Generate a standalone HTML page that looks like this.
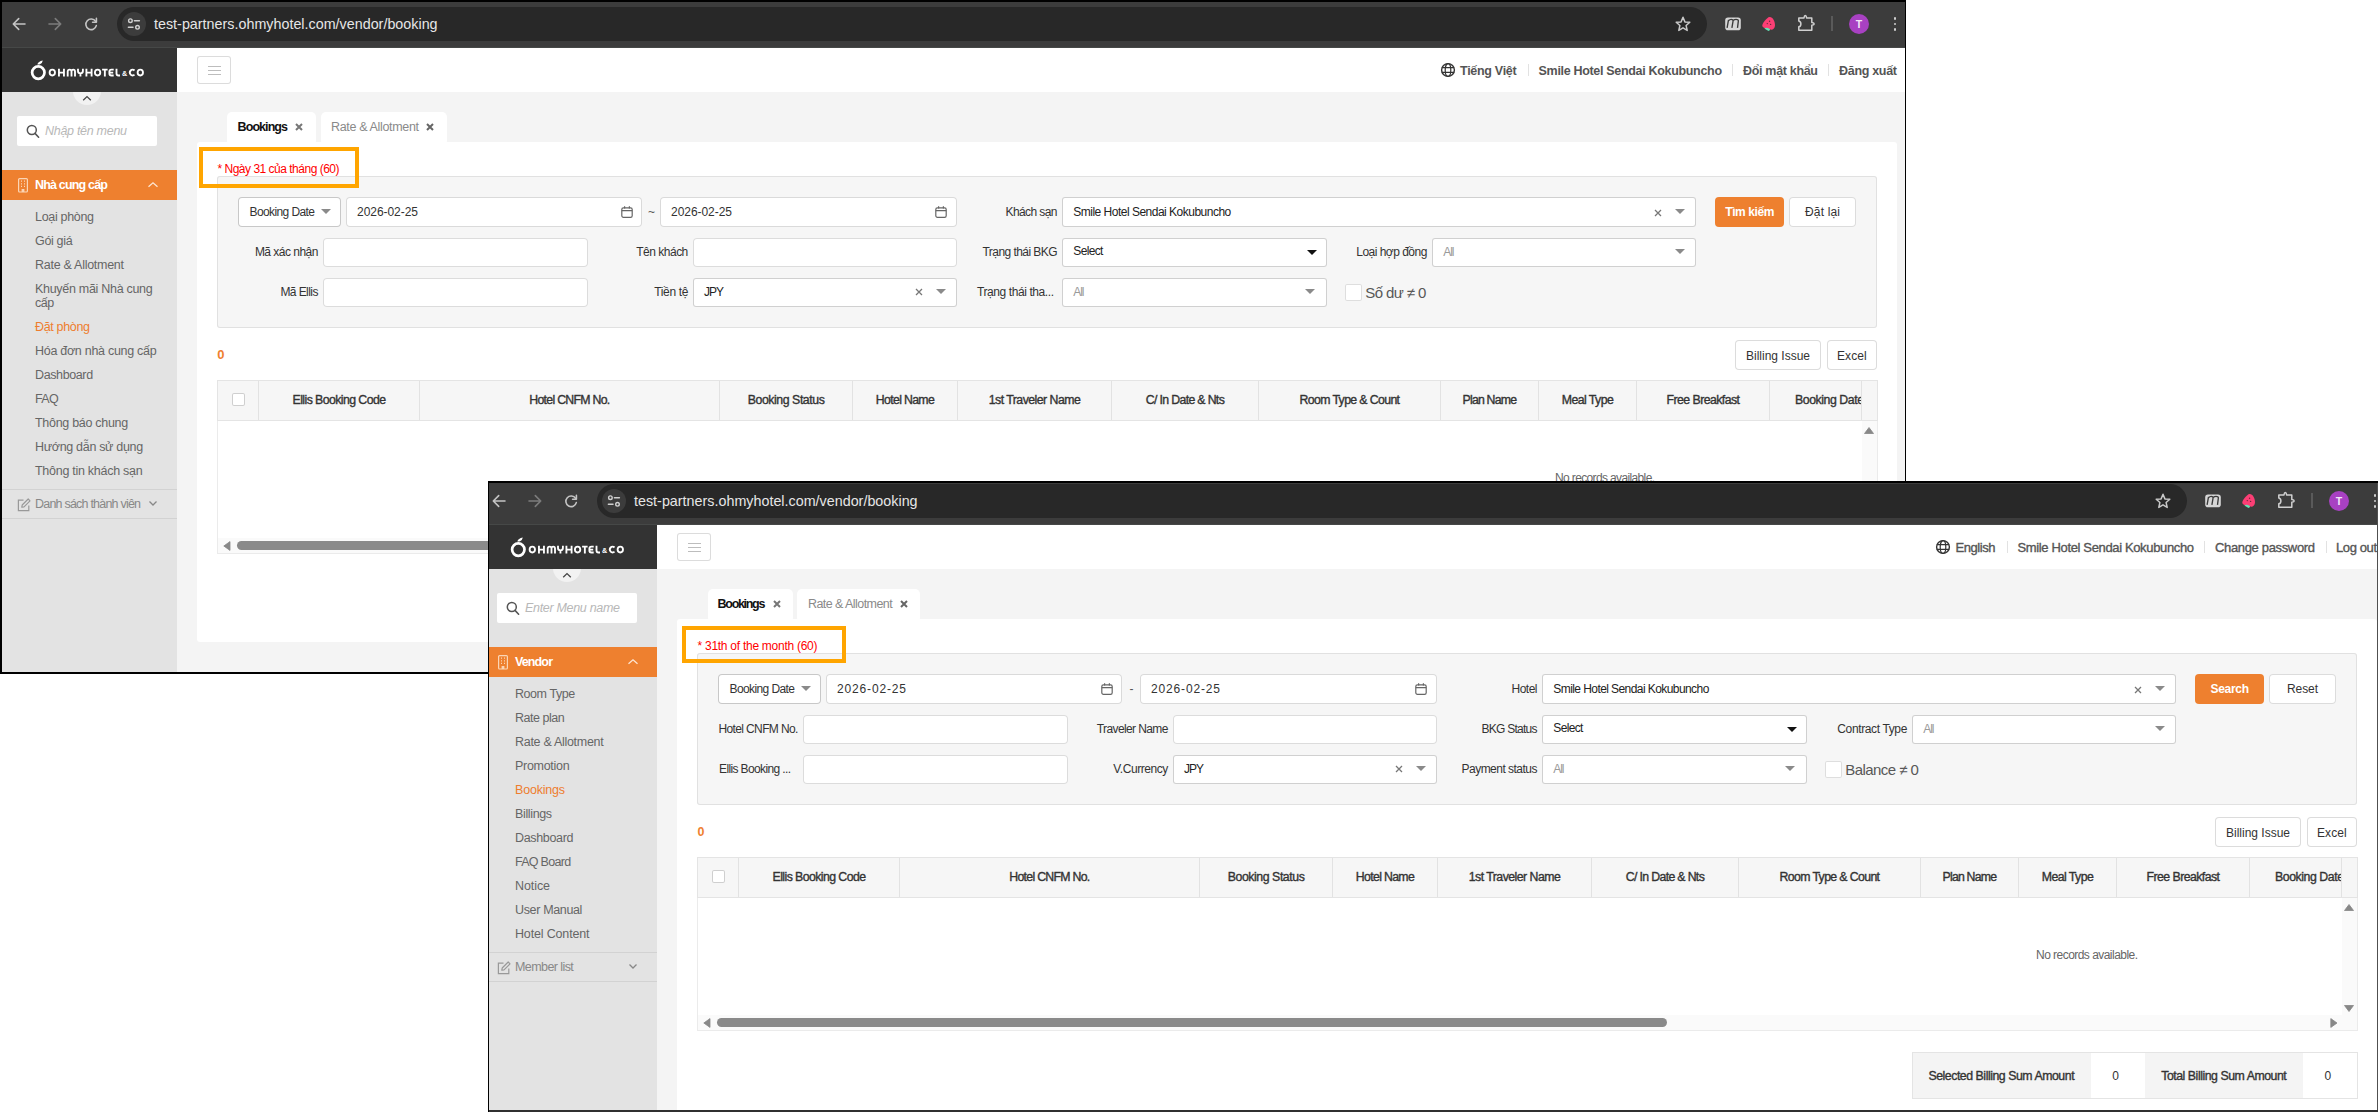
<!DOCTYPE html><html><head><meta charset="utf-8"><style>html,body{margin:0;padding:0;width:2378px;height:1112px;overflow:hidden;background:#fff;}body{position:relative;font-family:"Liberation Sans",sans-serif;}.b,.t,.s{position:absolute;}.t{white-space:nowrap;}</style></head><body><div class="b" style="left:0px;top:0px;width:1906px;height:674px;background:#000;overflow:hidden"><div class="b" style="left:2px;top:2px;width:1903px;height:670px;overflow:hidden"><div class="b" style="left:-2px;top:-2px;width:1910px;height:680px"><div class="b" style="left:0px;top:0px;width:1910px;height:47px;background:#3c3c3c;"></div><div class="b" style="left:0px;top:47px;width:1910px;height:1px;background:#464847;"></div><svg class="s" style="left:10px;top:15px;" width="18" height="18" viewBox="0 0 18 18"><path d="M15 9H3.8 M8.7 3.6L3.3 9L8.7 14.4" fill="none" stroke="#c4c4c4" stroke-width="1.6" stroke-linecap="round" stroke-linejoin="round"/></svg><svg class="s" style="left:46px;top:15px;" width="18" height="18" viewBox="0 0 18 18"><path d="M3 9H14.2 M9.3 3.6L14.7 9L9.3 14.4" fill="none" stroke="#7c7c7c" stroke-width="1.6" stroke-linecap="round" stroke-linejoin="round"/></svg><svg class="s" style="left:81px;top:15px;" width="19" height="19" viewBox="0 0 19 19"><path d="M14.6 6.4A5.3 5.3 0 1 0 15.3 10.6" fill="none" stroke="#c4c4c4" stroke-width="1.6" stroke-linecap="round"/><path d="M15.4 3.4V7.3H11.6" fill="none" stroke="#c4c4c4" stroke-width="1.6" stroke-linecap="round" stroke-linejoin="round"/></svg><div class="b" style="left:117px;top:7px;width:1590px;height:34px;background:#282828;border-radius:17px;"></div><div class="b" style="left:122px;top:12px;width:24px;height:24px;background:#3c3c3c;border-radius:12px;"></div><svg class="s" style="left:122px;top:12px;" width="24" height="24" viewBox="0 0 24 24"><circle cx="8.4" cy="8.7" r="1.8" fill="none" stroke="#d0d0d0" stroke-width="1.4"/><path d="M12.4 8.7H17.4 M6.4 15.3H11" stroke="#d0d0d0" stroke-width="1.5" stroke-linecap="round"/><circle cx="15.5" cy="15.3" r="1.8" fill="none" stroke="#d0d0d0" stroke-width="1.4"/></svg><div class="t" style="left:154.00px;top:17.00px;font-size:14.3px;line-height:14.3px;color:#e6e6e6;font-weight:400;font-style:normal;letter-spacing:0.016px;">test-partners.ohmyhotel.com/vendor/booking</div><svg class="s" style="left:1674px;top:15px;" width="18" height="18" viewBox="0 0 18 18"><path d="M9 2.2L10.9 6.9L15.8 7.3L12.1 10.5L13.2 15.4L9 12.8L4.8 15.4L5.9 10.5L2.2 7.3L7.1 6.9Z" fill="none" stroke="#c8c8c8" stroke-width="1.5" stroke-linejoin="round"/></svg><svg class="s" style="left:1723px;top:16px;" width="20" height="16" viewBox="0 0 20 16"><rect x="2.2" y="1.6" width="15.6" height="12.6" rx="2.8" fill="#d6d6d6"/><path d="M4.1 11.8L5.5 3.8 M5.4 4.8Q7.6 2.6 9.7 3.8Q10.3 4.3 10 5.4L8.9 11.8 M10.1 4.6Q12.5 2.6 14.9 3.8Q15.6 4.3 15.3 5.4L14.5 11.8" fill="none" stroke="#3a3a3a" stroke-width="1.35"/></svg><svg class="s" style="left:1760px;top:15px;" width="18" height="18" viewBox="0 0 18 18"><path d="M9.6 1.9C12.5 1.6 15.2 6 15 10.5C14.9 13.5 12.8 15 10.5 14.6C7.5 14.1 3.8 13.5 2.6 11.8C1.6 10.3 3 7.8 5 5.5C6.6 3.6 8 2 9.6 1.9Z" fill="#fb3f75"/><path d="M4.3 13.4Q7.5 11.6 10.1 14.3Q9.7 15.9 8.5 16.1Q6.4 14.6 4.3 13.4Z" fill="#62e3b5"/><circle cx="9.6" cy="6.3" r="0.7" fill="#6a2a3a"/><circle cx="7.3" cy="8.6" r="0.7" fill="#6a2a3a"/><circle cx="10.6" cy="9.4" r="0.7" fill="#6a2a3a"/></svg><svg class="s" style="left:1796px;top:13px;" width="20" height="20" viewBox="0 0 20 20"><path d="M2.8 4.9H8Q8.3 2.6 9.3 2.6Q10.3 2.6 10.6 4.9H15.8V9.6Q18.2 9.9 18.2 10.9Q18.2 11.9 15.8 12.2V17.2H2.8V13.8Q4.9 13.3 4.9 10.9Q4.9 8.5 2.8 8Z" fill="none" stroke="#d0d0d0" stroke-width="1.5" stroke-linejoin="round"/></svg><div class="b" style="left:1831px;top:16px;width:2px;height:15px;background:#5a5a5a;"></div><div class="b" style="left:1849px;top:14px;width:20px;height:20px;background:#a841c2;border-radius:10px;"></div><div class="t" style="left:1855.79px;top:19.00px;font-size:10.5px;line-height:10.5px;color:#f4e8f8;font-weight:700;font-style:normal;letter-spacing:0.000px;">T</div><div class="b" style="left:1893.6px;top:17.200000000000003px;width:2.800000000000182px;height:2.799999999999997px;background:#cfcfcf;border-radius:1.4px;"></div><div class="b" style="left:1893.6px;top:22.6px;width:2.800000000000182px;height:2.799999999999997px;background:#cfcfcf;border-radius:1.4px;"></div><div class="b" style="left:1893.6px;top:28.0px;width:2.800000000000182px;height:2.799999999999997px;background:#cfcfcf;border-radius:1.4px;"></div><div class="b" style="left:0px;top:48px;width:177px;height:44px;background:#333333;"></div><div class="b" style="left:0px;top:92px;width:177px;height:588px;background:#e3e3e3;"></div><div class="b" style="left:177px;top:48px;width:1733px;height:44px;background:#ffffff;"></div><div class="b" style="left:177px;top:92px;width:1733px;height:588px;background:#f4f4f4;"></div><div class="b" style="left:73px;top:77px;width:28px;height:28px;background:#f2f2f2;border-radius:14px;"></div><div class="b" style="left:0px;top:48px;width:177px;height:44px;background:#333333;"></div><svg class="s" style="left:29px;top:59px;" width="20" height="23" viewBox="0 0 20 23"><circle cx="9.3" cy="13.6" r="6.2" fill="none" stroke="#fff" stroke-width="2.7"/><path d="M8.3 5.4 Q9.2 2.2 13.8 1.4 Q13.6 4 10.6 5.6Z" fill="#fff"/></svg><svg class="s" style="left:40px;top:60px;" width="110" height="20" viewBox="0 0 110 20"><ellipse cx="12.3" cy="12.55" rx="2.68" ry="2.9" stroke="#fff" stroke-width="1.85" fill="none"/><ellipse cx="57.6" cy="12.55" rx="2.68" ry="2.9" stroke="#fff" stroke-width="1.85" fill="none"/><ellipse cx="100.3" cy="12.55" rx="2.68" ry="2.9" stroke="#fff" stroke-width="1.85" fill="none"/><path d="M18.95 8.7V16.4M23.95 8.7V16.4M18.95 12.55H23.95" stroke="#fff" stroke-width="1.85" fill="none"/><path d="M46.4 8.7V16.4M51.6 8.7V16.4M46.4 12.55H51.6" stroke="#fff" stroke-width="1.85" fill="none"/><path d="M27.7 16.4V11.6Q27.7 9.6 29.65 9.6Q31.5 9.6 31.5 11.6V16.4M31.5 11.6Q31.5 9.6 33.25 9.6Q35 9.6 35 11.6V16.4" stroke="#fff" stroke-width="1.85" fill="none"/><path d="M38 8.7V10.9Q38 13.3 40.45 13.3Q42.9 13.3 42.9 10.9V8.7M40.45 13.3V16.4" stroke="#fff" stroke-width="1.85" fill="none"/><path d="M62.1 9.6H67.6M64.85 9.6V16.4" stroke="#fff" stroke-width="1.85" fill="none"/><path d="M73.7 9.6H71.4Q69.4 9.6 69.4 11.6V13.5Q69.4 15.5 71.4 15.5H73.7M69.4 12.55H73.2" stroke="#fff" stroke-width="1.85" fill="none"/><path d="M76.5 8.7V13.5Q76.5 15.5 78.5 15.5H80" stroke="#fff" stroke-width="1.85" fill="none"/><path d="M94.5 10.5A2.7 2.9 0 1 0 94.5 14.6" stroke="#fff" stroke-width="1.85" fill="none"/></svg><div class="t" style="left:121.90px;top:70.00px;font-size:7.2px;line-height:7.2px;color:#fff;font-weight:700;font-style:normal;letter-spacing:0.000px;">&amp;</div><svg class="s" style="left:80px;top:93px;" width="14" height="10" viewBox="0 0 14 10"><path d="M3.2 7.2L7 3.6L10.8 7.2" fill="none" stroke="#444" stroke-width="1.3"/></svg><div class="b" style="left:17px;top:116px;width:140px;height:30px;background:#ffffff;border-radius:2px;"></div><svg class="s" style="left:24px;top:122px;" width="18" height="18" viewBox="0 0 18 18"><circle cx="7.8" cy="8" r="4.5" fill="none" stroke="#555" stroke-width="1.5"/><path d="M11 11.4L14.6 15.2" stroke="#555" stroke-width="1.6" stroke-linecap="round"/></svg><div class="t" style="left:45.00px;top:125.00px;font-size:12.5px;line-height:12.5px;color:#b8b8b8;font-weight:400;font-style:italic;letter-spacing:-0.289px;">Nhập tên menu</div><div class="b" style="left:0px;top:170px;width:177px;height:30px;background:#ee802f;"></div><svg class="s" style="left:16px;top:177px;" width="14" height="17" viewBox="0 0 14 17"><rect x="2.6" y="1.6" width="8.8" height="13.4" rx="1" fill="none" stroke="#fbd5b5" stroke-width="1.2"/><path d="M5 4.2h1M8 4.2h1M5 6.8h1M8 6.8h1M5 9.4h1M8 9.4h1" stroke="#fbd5b5" stroke-width="1.2"/><rect x="5.6" y="12" width="2.8" height="3" fill="#fbd5b5"/></svg><div class="t" style="left:35.00px;top:179.00px;font-size:12.5px;line-height:12.5px;color:#ffffff;font-weight:700;font-style:normal;letter-spacing:-0.814px;">Nhà cung cấp</div><svg class="s" style="left:145px;top:179px;" width="16" height="12" viewBox="0 0 16 12"><path d="M3.5 7.8L8 3.8L12.5 7.8" fill="none" stroke="#fde5d2" stroke-width="1.3"/></svg><div class="t" style="left:35.00px;top:211.00px;font-size:12.5px;line-height:12.5px;color:#666;font-weight:400;font-style:normal;letter-spacing:-0.318px;">Loại phòng</div><div class="t" style="left:35.00px;top:235.00px;font-size:12.5px;line-height:12.5px;color:#666;font-weight:400;font-style:normal;letter-spacing:-0.334px;">Gói giá</div><div class="t" style="left:35.00px;top:259.00px;font-size:12.5px;line-height:12.5px;color:#666;font-weight:400;font-style:normal;letter-spacing:-0.273px;">Rate &amp; Allotment</div><div class="t" style="left:35.00px;top:283.00px;font-size:12.5px;line-height:12.5px;color:#666;font-weight:400;font-style:normal;letter-spacing:-0.294px;">Khuyến mãi Nhà cung</div><div class="t" style="left:35.00px;top:297.00px;font-size:12.5px;line-height:12.5px;color:#666;font-weight:400;font-style:normal;letter-spacing:-0.426px;">cấp</div><div class="t" style="left:35.00px;top:321.00px;font-size:12.5px;line-height:12.5px;color:#ee7d2e;font-weight:400;font-style:normal;letter-spacing:-0.335px;">Đặt phòng</div><div class="t" style="left:35.00px;top:345.00px;font-size:12.5px;line-height:12.5px;color:#666;font-weight:400;font-style:normal;letter-spacing:-0.280px;">Hóa đơn nhà cung cấp</div><div class="t" style="left:35.00px;top:369.00px;font-size:12.5px;line-height:12.5px;color:#666;font-weight:400;font-style:normal;letter-spacing:-0.381px;">Dashboard</div><div class="t" style="left:35.00px;top:393.00px;font-size:12.5px;line-height:12.5px;color:#666;font-weight:400;font-style:normal;letter-spacing:-0.603px;">FAQ</div><div class="t" style="left:35.00px;top:417.00px;font-size:12.5px;line-height:12.5px;color:#666;font-weight:400;font-style:normal;letter-spacing:-0.292px;">Thông báo chung</div><div class="t" style="left:35.00px;top:441.00px;font-size:12.5px;line-height:12.5px;color:#666;font-weight:400;font-style:normal;letter-spacing:-0.312px;">Hướng dẫn sử dụng</div><div class="t" style="left:35.00px;top:465.00px;font-size:12.5px;line-height:12.5px;color:#666;font-weight:400;font-style:normal;letter-spacing:-0.276px;">Thông tin khách sạn</div><div class="b" style="left:0px;top:489px;width:177px;height:1px;background:#d2d2d2;"></div><svg class="s" style="left:15px;top:497px;" width="16" height="16" viewBox="0 0 16 16"><path d="M8.5 3.2H3.4V13.6H13.8V8.5" fill="none" stroke="#999" stroke-width="1.2"/><path d="M6.8 10.2L7.2 8L13.2 2L15 3.8L9 9.8Z" fill="none" stroke="#999" stroke-width="1.2" stroke-linejoin="round"/></svg><div class="t" style="left:35.00px;top:498.00px;font-size:12.5px;line-height:12.5px;color:#888;font-weight:400;font-style:normal;letter-spacing:-0.785px;">Danh sách thành viên</div><svg class="s" style="left:147px;top:499px;" width="12" height="10" viewBox="0 0 12 10"><path d="M2.5 2.5L6 6L9.5 2.5" fill="none" stroke="#888" stroke-width="1.3"/></svg><div class="b" style="left:0px;top:518px;width:177px;height:1px;background:#d2d2d2;"></div><div class="t" style="left:1839.00px;top:65.00px;font-size:12.5px;line-height:12.5px;color:#555;font-weight:700;font-style:normal;letter-spacing:-0.302px;">Đăng xuất</div><div class="b" style="left:1828px;top:64px;width:1px;height:12px;background:#e2e2e2;"></div><div class="t" style="left:1743.00px;top:65.00px;font-size:12.5px;line-height:12.5px;color:#555;font-weight:700;font-style:normal;letter-spacing:-0.316px;">Đổi mật khẩu</div><div class="b" style="left:1732px;top:64px;width:1px;height:12px;background:#e2e2e2;"></div><div class="t" style="left:1538.60px;top:65.00px;font-size:12.5px;line-height:12.5px;color:#555;font-weight:700;font-style:normal;letter-spacing:-0.320px;">Smile Hotel Sendai Kokubuncho</div><div class="b" style="left:1528px;top:64px;width:1px;height:12px;background:#e2e2e2;"></div><div class="t" style="left:1460.10px;top:65.00px;font-size:12.5px;line-height:12.5px;color:#555;font-weight:700;font-style:normal;letter-spacing:-0.308px;">Tiếng Việt</div><svg class="s" style="left:1439.8px;top:62px;" width="16" height="16" viewBox="0 0 16 16"><circle cx="8" cy="8" r="6.4" fill="none" stroke="#333" stroke-width="1.4"/><ellipse cx="8" cy="8" rx="2.8" ry="6.4" fill="none" stroke="#333" stroke-width="1.2"/><path d="M1.8 5.6H14.2M1.8 10.4H14.2" stroke="#333" stroke-width="1.2"/></svg><div class="b" style="left:197px;top:56px;width:34px;height:28px;background:#fff;box-shadow:inset 0 0 0 1px #dcdcdc;border-radius:3px;"></div><div class="b" style="left:208px;top:66px;width:13px;height:1px;background:#bdbdbd;"></div><div class="b" style="left:208px;top:70px;width:13px;height:1px;background:#bdbdbd;"></div><div class="b" style="left:208px;top:74px;width:13px;height:1px;background:#bdbdbd;"></div><div class="b" style="left:227px;top:112px;width:89px;height:34px;background:#fff;border-radius:5px;"></div><div class="b" style="left:321px;top:112px;width:126px;height:34px;background:#fff;border-radius:5px;"></div><div class="b" style="left:197px;top:141.5px;width:1700px;height:500.0px;background:#fff;border-radius:3px;"></div><div class="t" style="left:237.60px;top:121.00px;font-size:12.5px;line-height:12.5px;color:#111;font-weight:700;font-style:normal;letter-spacing:-0.934px;">Bookings</div><svg class="s" style="left:295.0px;top:123.0px;" width="8" height="8" viewBox="0 0 8 8"><path d="M1 1L7 7M7 1L1 7" stroke="#777" stroke-width="2"/></svg><div class="t" style="left:331.00px;top:121.00px;font-size:12.5px;line-height:12.5px;color:#8a8a8a;font-weight:400;font-style:normal;letter-spacing:-0.340px;">Rate &amp; Allotment</div><svg class="s" style="left:426.0px;top:123.0px;" width="8" height="8" viewBox="0 0 8 8"><path d="M1 1L7 7M7 1L1 7" stroke="#666" stroke-width="2"/></svg><div class="t" style="left:217.50px;top:163.00px;font-size:12px;line-height:12px;color:#ff0000;font-weight:400;font-style:normal;letter-spacing:-0.496px;">* Ngày 31 của tháng (60)</div><div class="b" style="left:217px;top:176px;width:1660px;height:152px;background:#f6f6f6;box-shadow:inset 0 0 0 1px #e1e1e1;border-radius:3px;"></div><div class="b" style="left:238px;top:197px;width:103px;height:30px;background:#fff;box-shadow:inset 0 0 0 1px #c8c8c8;border-radius:4px;"></div><div class="t" style="left:249.50px;top:206.00px;font-size:12px;line-height:12px;color:#333;font-weight:400;font-style:normal;letter-spacing:-0.595px;">Booking Date</div><svg class="s" style="left:320.5px;top:209.1px;" width="10" height="5" viewBox="0 0 10 5"><path d="M0 0H10L5.0 5Z" fill="#8a8a8a"/></svg><div class="b" style="left:346px;top:197px;width:296px;height:30px;background:#fff;box-shadow:inset 0 0 0 1px #dadada;border-radius:4px;"></div><div class="t" style="left:357.00px;top:206.00px;font-size:12px;line-height:12px;color:#333;font-weight:400;font-style:normal;letter-spacing:-0.042px;">2026-02-25</div><svg class="s" style="left:619.5px;top:205px;" width="14" height="14" viewBox="0 0 14 14"><rect x="1.8" y="2.8" width="10.4" height="9.6" rx="1.6" fill="none" stroke="#666" stroke-width="1.2"/><path d="M1.8 5.6H12.2M4.6 1.2V3.6M9.4 1.2V3.6" stroke="#666" stroke-width="1.2"/></svg><div class="t" style="left:648.00px;top:206.00px;font-size:12px;line-height:12px;color:#555;font-weight:400;font-style:normal;letter-spacing:0.000px;">~</div><div class="b" style="left:660px;top:197px;width:297px;height:30px;background:#fff;box-shadow:inset 0 0 0 1px #dadada;border-radius:4px;"></div><div class="t" style="left:671.00px;top:206.00px;font-size:12px;line-height:12px;color:#333;font-weight:400;font-style:normal;letter-spacing:-0.042px;">2026-02-25</div><svg class="s" style="left:933.5px;top:205px;" width="14" height="14" viewBox="0 0 14 14"><rect x="1.8" y="2.8" width="10.4" height="9.6" rx="1.6" fill="none" stroke="#666" stroke-width="1.2"/><path d="M1.8 5.6H12.2M4.6 1.2V3.6M9.4 1.2V3.6" stroke="#666" stroke-width="1.2"/></svg><div class="t" style="left:1005.50px;top:206.00px;font-size:12px;line-height:12px;color:#333;font-weight:400;font-style:normal;letter-spacing:-0.588px;">Khách sạn</div><div class="b" style="left:1062px;top:197px;width:634px;height:30px;background:#fff;box-shadow:inset 0 0 0 1px #d0d0d0;border-radius:3px;"></div><div class="t" style="left:1073.30px;top:206.00px;font-size:12px;line-height:12px;color:#222;font-weight:400;font-style:normal;letter-spacing:-0.504px;">Smile Hotel Sendai Kokubuncho</div><svg class="s" style="left:1654.0px;top:208.5px;" width="8" height="8" viewBox="0 0 8 8"><path d="M1 1L7 7M7 1L1 7" stroke="#777" stroke-width="1.3"/></svg><svg class="s" style="left:1675.0px;top:209.1px;" width="10" height="5" viewBox="0 0 10 5"><path d="M0 0H10L5.0 5Z" fill="#8a8a8a"/></svg><div class="b" style="left:1715px;top:197px;width:69px;height:30px;background:#ee802f;border-radius:4px;"></div><div class="t" style="left:1725.30px;top:206.00px;font-size:12px;line-height:12px;color:#fff;font-weight:700;font-style:normal;letter-spacing:-0.431px;">Tìm kiếm</div><div class="b" style="left:1789px;top:197px;width:67px;height:30px;background:#fff;box-shadow:inset 0 0 0 1px #dcdcdc;border-radius:4px;"></div><div class="t" style="left:1805.00px;top:206.00px;font-size:12px;line-height:12px;color:#333;font-weight:400;font-style:normal;letter-spacing:0.165px;">Đặt lại</div><div class="t" style="left:254.90px;top:246.00px;font-size:12px;line-height:12px;color:#333;font-weight:400;font-style:normal;letter-spacing:-0.520px;">Mã xác nhận</div><div class="b" style="left:323px;top:238px;width:265px;height:29px;background:#fff;box-shadow:inset 0 0 0 1px #dcdcdc;border-radius:4px;"></div><div class="t" style="left:636.30px;top:246.00px;font-size:12px;line-height:12px;color:#333;font-weight:400;font-style:normal;letter-spacing:-0.504px;">Tên khách</div><div class="b" style="left:693px;top:238px;width:264px;height:29px;background:#fff;box-shadow:inset 0 0 0 1px #dcdcdc;border-radius:4px;"></div><div class="t" style="left:982.50px;top:246.00px;font-size:12px;line-height:12px;color:#333;font-weight:400;font-style:normal;letter-spacing:-0.558px;">Trạng thái BKG</div><div class="b" style="left:1062px;top:238px;width:265px;height:29px;background:#fff;box-shadow:inset 0 0 0 1px #d0d0d0;border-radius:3px;"></div><div class="t" style="left:1073.30px;top:245.00px;font-size:12px;line-height:12px;color:#222;font-weight:400;font-style:normal;letter-spacing:-0.670px;">Select</div><svg class="s" style="left:1307.0px;top:250.0px;" width="10" height="5" viewBox="0 0 10 5"><path d="M0 0H10L5.0 5Z" fill="#111"/></svg><div class="t" style="left:1356.30px;top:246.00px;font-size:12px;line-height:12px;color:#333;font-weight:400;font-style:normal;letter-spacing:-0.522px;">Loại hợp đồng</div><div class="b" style="left:1432px;top:238px;width:264px;height:29px;background:#fff;box-shadow:inset 0 0 0 1px #d0d0d0;border-radius:3px;"></div><div class="t" style="left:1443.30px;top:246.00px;font-size:12px;line-height:12px;color:#9a9a9a;font-weight:400;font-style:normal;letter-spacing:-1.168px;">All</div><svg class="s" style="left:1675.0px;top:249.1px;" width="10" height="5" viewBox="0 0 10 5"><path d="M0 0H10L5.0 5Z" fill="#8a8a8a"/></svg><div class="t" style="left:280.40px;top:286.00px;font-size:12px;line-height:12px;color:#333;font-weight:400;font-style:normal;letter-spacing:-0.572px;">Mã Ellis</div><div class="b" style="left:323px;top:278px;width:265px;height:29px;background:#fff;box-shadow:inset 0 0 0 1px #dcdcdc;border-radius:4px;"></div><div class="t" style="left:654.30px;top:286.00px;font-size:12px;line-height:12px;color:#333;font-weight:400;font-style:normal;letter-spacing:-0.373px;">Tiền tệ</div><div class="b" style="left:693px;top:278px;width:264px;height:29px;background:#fff;box-shadow:inset 0 0 0 1px #d0d0d0;border-radius:3px;"></div><div class="t" style="left:704.00px;top:286.00px;font-size:12px;line-height:12px;color:#222;font-weight:400;font-style:normal;letter-spacing:-1.004px;">JPY</div><svg class="s" style="left:915.0px;top:288.0px;" width="8" height="8" viewBox="0 0 8 8"><path d="M1 1L7 7M7 1L1 7" stroke="#777" stroke-width="1.3"/></svg><svg class="s" style="left:936.0px;top:288.8px;" width="10" height="5" viewBox="0 0 10 5"><path d="M0 0H10L5.0 5Z" fill="#8a8a8a"/></svg><div class="t" style="left:977.00px;top:286.00px;font-size:12px;line-height:12px;color:#333;font-weight:400;font-style:normal;letter-spacing:-0.412px;">Trạng thái tha...</div><div class="b" style="left:1062px;top:278px;width:265px;height:29px;background:#fff;box-shadow:inset 0 0 0 1px #d0d0d0;border-radius:3px;"></div><div class="t" style="left:1073.30px;top:286.00px;font-size:12px;line-height:12px;color:#9a9a9a;font-weight:400;font-style:normal;letter-spacing:-1.168px;">All</div><svg class="s" style="left:1305.0px;top:288.8px;" width="10" height="5" viewBox="0 0 10 5"><path d="M0 0H10L5.0 5Z" fill="#8a8a8a"/></svg><div class="b" style="left:1345px;top:284px;width:17px;height:17px;background:#fff;box-shadow:inset 0 0 0 1px #dedede;border-radius:2px;"></div><div class="t" style="left:1365.30px;top:285.00px;font-size:15px;line-height:15px;color:#585858;font-weight:400;font-style:normal;letter-spacing:-0.601px;">Số dư ≠ 0</div><div class="t" style="left:217.20px;top:348.00px;font-size:13px;line-height:13px;color:#ef8030;font-weight:700;font-style:normal;letter-spacing:0.000px;font-family:"Liberation Serif",serif;">0</div><div class="b" style="left:1735px;top:340px;width:86px;height:30px;background:#fff;box-shadow:inset 0 0 0 1px #dcdcdc;border-radius:4px;"></div><div class="t" style="left:1746.00px;top:350.00px;font-size:12px;line-height:12px;color:#333;font-weight:400;font-style:normal;letter-spacing:-0.002px;">Billing Issue</div><div class="b" style="left:1826.7px;top:340px;width:50.299999999999955px;height:30px;background:#fff;box-shadow:inset 0 0 0 1px #dcdcdc;border-radius:4px;"></div><div class="t" style="left:1837.05px;top:350.00px;font-size:12px;line-height:12px;color:#333;font-weight:400;font-style:normal;letter-spacing:0.039px;">Excel</div><div class="b" style="left:217px;top:380px;width:1661px;height:174px;background:#fff;box-shadow:inset 0 0 0 1px #ebebeb;"></div><div class="b" style="left:217px;top:380px;width:1661px;height:41px;background:#f6f6f6;box-shadow:inset 0 0 0 1px #e4e4e4;"></div><div class="b" style="left:258px;top:381px;width:1px;height:39px;background:#e2e2e2;"></div><div class="b" style="left:419px;top:381px;width:1px;height:39px;background:#e2e2e2;"></div><div class="b" style="left:719px;top:381px;width:1px;height:39px;background:#e2e2e2;"></div><div class="b" style="left:852px;top:381px;width:1px;height:39px;background:#e2e2e2;"></div><div class="b" style="left:957px;top:381px;width:1px;height:39px;background:#e2e2e2;"></div><div class="b" style="left:1111px;top:381px;width:1px;height:39px;background:#e2e2e2;"></div><div class="b" style="left:1258px;top:381px;width:1px;height:39px;background:#e2e2e2;"></div><div class="b" style="left:1440px;top:381px;width:1px;height:39px;background:#e2e2e2;"></div><div class="b" style="left:1538px;top:381px;width:1px;height:39px;background:#e2e2e2;"></div><div class="b" style="left:1636px;top:381px;width:1px;height:39px;background:#e2e2e2;"></div><div class="b" style="left:1769px;top:381px;width:1px;height:39px;background:#e2e2e2;"></div><div class="b" style="left:1861px;top:381px;width:1px;height:39px;background:#e2e2e2;"></div><div class="t" style="left:292.55px;top:394.00px;font-size:12.3px;line-height:12.3px;color:#333;font-weight:400;font-style:normal;letter-spacing:-0.573px;-webkit-text-stroke:0.35px #333;">Ellis Booking Code</div><div class="t" style="left:529.30px;top:394.00px;font-size:12.3px;line-height:12.3px;color:#333;font-weight:400;font-style:normal;letter-spacing:-0.709px;-webkit-text-stroke:0.35px #333;">Hotel CNFM No.</div><div class="t" style="left:747.80px;top:394.00px;font-size:12.3px;line-height:12.3px;color:#333;font-weight:400;font-style:normal;letter-spacing:-0.441px;-webkit-text-stroke:0.35px #333;">Booking Status</div><div class="t" style="left:875.80px;top:394.00px;font-size:12.3px;line-height:12.3px;color:#333;font-weight:400;font-style:normal;letter-spacing:-0.660px;-webkit-text-stroke:0.35px #333;">Hotel Name</div><div class="t" style="left:988.80px;top:394.00px;font-size:12.3px;line-height:12.3px;color:#333;font-weight:400;font-style:normal;letter-spacing:-0.530px;-webkit-text-stroke:0.35px #333;">1st Traveler Name</div><div class="t" style="left:1145.80px;top:394.00px;font-size:12.3px;line-height:12.3px;color:#333;font-weight:400;font-style:normal;letter-spacing:-0.657px;-webkit-text-stroke:0.35px #333;">C/ In Date &amp; Nts</div><div class="t" style="left:1299.55px;top:394.00px;font-size:12.3px;line-height:12.3px;color:#333;font-weight:400;font-style:normal;letter-spacing:-0.627px;-webkit-text-stroke:0.35px #333;">Room Type &amp; Count</div><div class="t" style="left:1462.55px;top:394.00px;font-size:12.3px;line-height:12.3px;color:#333;font-weight:400;font-style:normal;letter-spacing:-0.793px;-webkit-text-stroke:0.35px #333;">Plan Name</div><div class="t" style="left:1561.80px;top:394.00px;font-size:12.3px;line-height:12.3px;color:#333;font-weight:400;font-style:normal;letter-spacing:-0.565px;-webkit-text-stroke:0.35px #333;">Meal Type</div><div class="t" style="left:1666.55px;top:394.00px;font-size:12.3px;line-height:12.3px;color:#333;font-weight:400;font-style:normal;letter-spacing:-0.551px;-webkit-text-stroke:0.35px #333;">Free Breakfast</div><div class="b" style="left:1770px;top:381px;width:91px;height:39px;overflow:hidden"><div class="t" style="left:25.00px;top:13.00px;font-size:12.3px;line-height:12.3px;color:#333;font-weight:400;font-style:normal;letter-spacing:-0.440px;-webkit-text-stroke:0.35px #333;">Booking Date</div></div><div class="b" style="left:232px;top:393px;width:13px;height:13px;background:#fff;box-shadow:inset 0 0 0 1px #cfcfcf;border-radius:2px;"></div><div class="b" style="left:1862px;top:421px;width:15px;height:117px;background:#fafafa;"></div><svg class="s" style="left:1863.5px;top:426.5px;" width="10" height="7" viewBox="0 0 10 7"><path d="M0.5 6.5H9.5L5 0.5Z" fill="#888" stroke="#888" stroke-width="0.8" stroke-linejoin="round"/></svg><svg class="s" style="left:1863.5px;top:527.5px;" width="10" height="7" viewBox="0 0 10 7"><path d="M0.5 0.5H9.5L5 6.5Z" fill="#888" stroke="#888" stroke-width="0.8" stroke-linejoin="round"/></svg><div class="t" style="left:1555.00px;top:472.00px;font-size:12px;line-height:12px;color:#666;font-weight:400;font-style:normal;letter-spacing:-0.636px;">No records available.</div><div class="b" style="left:218px;top:538px;width:1659px;height:15px;background:#fafafa;"></div><svg class="s" style="left:222.5px;top:541px;" width="8" height="10" viewBox="0 0 8 10"><path d="M7 0.6V9.4L0.8 5Z" fill="#888" stroke="#888" stroke-width="0.8" stroke-linejoin="round"/></svg><div class="b" style="left:236.8px;top:541px;width:950.5px;height:9px;background:#8a8a8a;border-radius:4.5px;"></div><svg class="s" style="left:1850px;top:541px;" width="8" height="10" viewBox="0 0 8 10"><path d="M0.8 0.6V9.4L7 5Z" fill="#888" stroke="#888" stroke-width="0.8" stroke-linejoin="round"/></svg><div class="b" style="left:1432px;top:575px;width:446px;height:47px;background:#fff;box-shadow:inset 0 0 0 1px #e4e4e4;"></div><div class="b" style="left:1433px;top:576px;width:177.5px;height:45px;background:#f4f4f4;"></div><div class="b" style="left:1664.5px;top:576px;width:158.0px;height:45px;background:#f4f4f4;"></div><div class="t" style="left:1448.40px;top:593.00px;font-size:12.3px;line-height:12.3px;color:#333;font-weight:400;font-style:normal;letter-spacing:-0.451px;-webkit-text-stroke:0.35px #333;">Selected Billing Sum Amount</div><div class="t" style="left:1632.16px;top:593.00px;font-size:12px;line-height:12px;color:#333;font-weight:400;font-style:normal;letter-spacing:0.000px;">0</div><div class="t" style="left:1681.20px;top:593.00px;font-size:12.3px;line-height:12.3px;color:#333;font-weight:400;font-style:normal;letter-spacing:-0.454px;-webkit-text-stroke:0.35px #333;">Total Billing Sum Amount</div><div class="t" style="left:1844.46px;top:593.00px;font-size:12px;line-height:12px;color:#333;font-weight:400;font-style:normal;letter-spacing:0.000px;">0</div><div class="b" style="left:199px;top:147px;width:152px;height:33px;border:4px solid #ffa500"></div></div></div></div><div class="b" style="left:488px;top:481px;width:1890px;height:631px;background:#000;overflow:hidden"><div class="b" style="left:1px;top:2px;width:1888px;height:627px;overflow:hidden"><div class="b" style="left:-9px;top:-6px;width:1910px;height:680px"><div class="b" style="left:0px;top:0px;width:1910px;height:47px;background:#3c3c3c;"></div><div class="b" style="left:0px;top:47px;width:1910px;height:1px;background:#464847;"></div><svg class="s" style="left:10px;top:15px;" width="18" height="18" viewBox="0 0 18 18"><path d="M15 9H3.8 M8.7 3.6L3.3 9L8.7 14.4" fill="none" stroke="#c4c4c4" stroke-width="1.6" stroke-linecap="round" stroke-linejoin="round"/></svg><svg class="s" style="left:46px;top:15px;" width="18" height="18" viewBox="0 0 18 18"><path d="M3 9H14.2 M9.3 3.6L14.7 9L9.3 14.4" fill="none" stroke="#7c7c7c" stroke-width="1.6" stroke-linecap="round" stroke-linejoin="round"/></svg><svg class="s" style="left:81px;top:15px;" width="19" height="19" viewBox="0 0 19 19"><path d="M14.6 6.4A5.3 5.3 0 1 0 15.3 10.6" fill="none" stroke="#c4c4c4" stroke-width="1.6" stroke-linecap="round"/><path d="M15.4 3.4V7.3H11.6" fill="none" stroke="#c4c4c4" stroke-width="1.6" stroke-linecap="round" stroke-linejoin="round"/></svg><div class="b" style="left:117px;top:7px;width:1590px;height:34px;background:#282828;border-radius:17px;"></div><div class="b" style="left:122px;top:12px;width:24px;height:24px;background:#3c3c3c;border-radius:12px;"></div><svg class="s" style="left:122px;top:12px;" width="24" height="24" viewBox="0 0 24 24"><circle cx="8.4" cy="8.7" r="1.8" fill="none" stroke="#d0d0d0" stroke-width="1.4"/><path d="M12.4 8.7H17.4 M6.4 15.3H11" stroke="#d0d0d0" stroke-width="1.5" stroke-linecap="round"/><circle cx="15.5" cy="15.3" r="1.8" fill="none" stroke="#d0d0d0" stroke-width="1.4"/></svg><div class="t" style="left:154.00px;top:17.00px;font-size:14.3px;line-height:14.3px;color:#e6e6e6;font-weight:400;font-style:normal;letter-spacing:0.016px;">test-partners.ohmyhotel.com/vendor/booking</div><svg class="s" style="left:1674px;top:15px;" width="18" height="18" viewBox="0 0 18 18"><path d="M9 2.2L10.9 6.9L15.8 7.3L12.1 10.5L13.2 15.4L9 12.8L4.8 15.4L5.9 10.5L2.2 7.3L7.1 6.9Z" fill="none" stroke="#c8c8c8" stroke-width="1.5" stroke-linejoin="round"/></svg><svg class="s" style="left:1723px;top:16px;" width="20" height="16" viewBox="0 0 20 16"><rect x="2.2" y="1.6" width="15.6" height="12.6" rx="2.8" fill="#d6d6d6"/><path d="M4.1 11.8L5.5 3.8 M5.4 4.8Q7.6 2.6 9.7 3.8Q10.3 4.3 10 5.4L8.9 11.8 M10.1 4.6Q12.5 2.6 14.9 3.8Q15.6 4.3 15.3 5.4L14.5 11.8" fill="none" stroke="#3a3a3a" stroke-width="1.35"/></svg><svg class="s" style="left:1760px;top:15px;" width="18" height="18" viewBox="0 0 18 18"><path d="M9.6 1.9C12.5 1.6 15.2 6 15 10.5C14.9 13.5 12.8 15 10.5 14.6C7.5 14.1 3.8 13.5 2.6 11.8C1.6 10.3 3 7.8 5 5.5C6.6 3.6 8 2 9.6 1.9Z" fill="#fb3f75"/><path d="M4.3 13.4Q7.5 11.6 10.1 14.3Q9.7 15.9 8.5 16.1Q6.4 14.6 4.3 13.4Z" fill="#62e3b5"/><circle cx="9.6" cy="6.3" r="0.7" fill="#6a2a3a"/><circle cx="7.3" cy="8.6" r="0.7" fill="#6a2a3a"/><circle cx="10.6" cy="9.4" r="0.7" fill="#6a2a3a"/></svg><svg class="s" style="left:1796px;top:13px;" width="20" height="20" viewBox="0 0 20 20"><path d="M2.8 4.9H8Q8.3 2.6 9.3 2.6Q10.3 2.6 10.6 4.9H15.8V9.6Q18.2 9.9 18.2 10.9Q18.2 11.9 15.8 12.2V17.2H2.8V13.8Q4.9 13.3 4.9 10.9Q4.9 8.5 2.8 8Z" fill="none" stroke="#d0d0d0" stroke-width="1.5" stroke-linejoin="round"/></svg><div class="b" style="left:1831px;top:16px;width:2px;height:15px;background:#5a5a5a;"></div><div class="b" style="left:1849px;top:14px;width:20px;height:20px;background:#a841c2;border-radius:10px;"></div><div class="t" style="left:1855.79px;top:19.00px;font-size:10.5px;line-height:10.5px;color:#f4e8f8;font-weight:700;font-style:normal;letter-spacing:0.000px;">T</div><div class="b" style="left:1893.6px;top:17.200000000000003px;width:2.800000000000182px;height:2.799999999999997px;background:#cfcfcf;border-radius:1.4px;"></div><div class="b" style="left:1893.6px;top:22.6px;width:2.800000000000182px;height:2.799999999999997px;background:#cfcfcf;border-radius:1.4px;"></div><div class="b" style="left:1893.6px;top:28.0px;width:2.800000000000182px;height:2.799999999999997px;background:#cfcfcf;border-radius:1.4px;"></div><div class="b" style="left:0px;top:48px;width:177px;height:44px;background:#333333;"></div><div class="b" style="left:0px;top:92px;width:177px;height:588px;background:#e3e3e3;"></div><div class="b" style="left:177px;top:48px;width:1733px;height:44px;background:#ffffff;"></div><div class="b" style="left:177px;top:92px;width:1733px;height:588px;background:#f4f4f4;"></div><div class="b" style="left:73px;top:77px;width:28px;height:28px;background:#f2f2f2;border-radius:14px;"></div><div class="b" style="left:0px;top:48px;width:177px;height:44px;background:#333333;"></div><svg class="s" style="left:29px;top:59px;" width="20" height="23" viewBox="0 0 20 23"><circle cx="9.3" cy="13.6" r="6.2" fill="none" stroke="#fff" stroke-width="2.7"/><path d="M8.3 5.4 Q9.2 2.2 13.8 1.4 Q13.6 4 10.6 5.6Z" fill="#fff"/></svg><svg class="s" style="left:40px;top:60px;" width="110" height="20" viewBox="0 0 110 20"><ellipse cx="12.3" cy="12.55" rx="2.68" ry="2.9" stroke="#fff" stroke-width="1.85" fill="none"/><ellipse cx="57.6" cy="12.55" rx="2.68" ry="2.9" stroke="#fff" stroke-width="1.85" fill="none"/><ellipse cx="100.3" cy="12.55" rx="2.68" ry="2.9" stroke="#fff" stroke-width="1.85" fill="none"/><path d="M18.95 8.7V16.4M23.95 8.7V16.4M18.95 12.55H23.95" stroke="#fff" stroke-width="1.85" fill="none"/><path d="M46.4 8.7V16.4M51.6 8.7V16.4M46.4 12.55H51.6" stroke="#fff" stroke-width="1.85" fill="none"/><path d="M27.7 16.4V11.6Q27.7 9.6 29.65 9.6Q31.5 9.6 31.5 11.6V16.4M31.5 11.6Q31.5 9.6 33.25 9.6Q35 9.6 35 11.6V16.4" stroke="#fff" stroke-width="1.85" fill="none"/><path d="M38 8.7V10.9Q38 13.3 40.45 13.3Q42.9 13.3 42.9 10.9V8.7M40.45 13.3V16.4" stroke="#fff" stroke-width="1.85" fill="none"/><path d="M62.1 9.6H67.6M64.85 9.6V16.4" stroke="#fff" stroke-width="1.85" fill="none"/><path d="M73.7 9.6H71.4Q69.4 9.6 69.4 11.6V13.5Q69.4 15.5 71.4 15.5H73.7M69.4 12.55H73.2" stroke="#fff" stroke-width="1.85" fill="none"/><path d="M76.5 8.7V13.5Q76.5 15.5 78.5 15.5H80" stroke="#fff" stroke-width="1.85" fill="none"/><path d="M94.5 10.5A2.7 2.9 0 1 0 94.5 14.6" stroke="#fff" stroke-width="1.85" fill="none"/></svg><div class="t" style="left:121.90px;top:70.00px;font-size:7.2px;line-height:7.2px;color:#fff;font-weight:700;font-style:normal;letter-spacing:0.000px;">&amp;</div><svg class="s" style="left:80px;top:93px;" width="14" height="10" viewBox="0 0 14 10"><path d="M3.2 7.2L7 3.6L10.8 7.2" fill="none" stroke="#444" stroke-width="1.3"/></svg><div class="b" style="left:17px;top:116px;width:140px;height:30px;background:#ffffff;border-radius:2px;"></div><svg class="s" style="left:24px;top:122px;" width="18" height="18" viewBox="0 0 18 18"><circle cx="7.8" cy="8" r="4.5" fill="none" stroke="#555" stroke-width="1.5"/><path d="M11 11.4L14.6 15.2" stroke="#555" stroke-width="1.6" stroke-linecap="round"/></svg><div class="t" style="left:45.00px;top:125.00px;font-size:12.5px;line-height:12.5px;color:#b8b8b8;font-weight:400;font-style:italic;letter-spacing:-0.311px;">Enter Menu name</div><div class="b" style="left:0px;top:170px;width:177px;height:30px;background:#ee802f;"></div><svg class="s" style="left:16px;top:177px;" width="14" height="17" viewBox="0 0 14 17"><rect x="2.6" y="1.6" width="8.8" height="13.4" rx="1" fill="none" stroke="#fbd5b5" stroke-width="1.2"/><path d="M5 4.2h1M8 4.2h1M5 6.8h1M8 6.8h1M5 9.4h1M8 9.4h1" stroke="#fbd5b5" stroke-width="1.2"/><rect x="5.6" y="12" width="2.8" height="3" fill="#fbd5b5"/></svg><div class="t" style="left:35.00px;top:179.00px;font-size:12.5px;line-height:12.5px;color:#ffffff;font-weight:700;font-style:normal;letter-spacing:-0.874px;">Vendor</div><svg class="s" style="left:145px;top:179px;" width="16" height="12" viewBox="0 0 16 12"><path d="M3.5 7.8L8 3.8L12.5 7.8" fill="none" stroke="#fde5d2" stroke-width="1.3"/></svg><div class="t" style="left:35.00px;top:211.00px;font-size:12.5px;line-height:12.5px;color:#666;font-weight:400;font-style:normal;letter-spacing:-0.436px;">Room Type</div><div class="t" style="left:35.00px;top:235.00px;font-size:12.5px;line-height:12.5px;color:#666;font-weight:400;font-style:normal;letter-spacing:-0.463px;">Rate plan</div><div class="t" style="left:35.00px;top:259.00px;font-size:12.5px;line-height:12.5px;color:#666;font-weight:400;font-style:normal;letter-spacing:-0.293px;">Rate &amp; Allotment</div><div class="t" style="left:35.00px;top:283.00px;font-size:12.5px;line-height:12.5px;color:#666;font-weight:400;font-style:normal;letter-spacing:-0.296px;">Promotion</div><div class="t" style="left:35.00px;top:307.00px;font-size:12.5px;line-height:12.5px;color:#ee7d2e;font-weight:400;font-style:normal;letter-spacing:-0.189px;">Bookings</div><div class="t" style="left:35.00px;top:331.00px;font-size:12.5px;line-height:12.5px;color:#666;font-weight:400;font-style:normal;letter-spacing:-0.357px;">Billings</div><div class="t" style="left:35.00px;top:355.00px;font-size:12.5px;line-height:12.5px;color:#666;font-weight:400;font-style:normal;letter-spacing:-0.343px;">Dashboard</div><div class="t" style="left:35.00px;top:379.00px;font-size:12.5px;line-height:12.5px;color:#666;font-weight:400;font-style:normal;letter-spacing:-0.717px;">FAQ Board</div><div class="t" style="left:35.00px;top:403.00px;font-size:12.5px;line-height:12.5px;color:#666;font-weight:400;font-style:normal;letter-spacing:-0.086px;">Notice</div><div class="t" style="left:35.00px;top:427.00px;font-size:12.5px;line-height:12.5px;color:#666;font-weight:400;font-style:normal;letter-spacing:-0.346px;">User Manual</div><div class="t" style="left:35.00px;top:451.00px;font-size:12.5px;line-height:12.5px;color:#666;font-weight:400;font-style:normal;letter-spacing:-0.161px;">Hotel Content</div><div class="b" style="left:0px;top:475px;width:177px;height:1px;background:#d2d2d2;"></div><svg class="s" style="left:15px;top:483px;" width="16" height="16" viewBox="0 0 16 16"><path d="M8.5 3.2H3.4V13.6H13.8V8.5" fill="none" stroke="#999" stroke-width="1.2"/><path d="M6.8 10.2L7.2 8L13.2 2L15 3.8L9 9.8Z" fill="none" stroke="#999" stroke-width="1.2" stroke-linejoin="round"/></svg><div class="t" style="left:35.00px;top:484.00px;font-size:12.5px;line-height:12.5px;color:#888;font-weight:400;font-style:normal;letter-spacing:-0.579px;">Member list</div><svg class="s" style="left:147px;top:485px;" width="12" height="10" viewBox="0 0 12 10"><path d="M2.5 2.5L6 6L9.5 2.5" fill="none" stroke="#888" stroke-width="1.3"/></svg><div class="b" style="left:0px;top:504px;width:177px;height:1px;background:#d2d2d2;"></div><div class="t" style="left:1856.00px;top:64.00px;font-size:13px;line-height:13px;color:#555;font-weight:400;font-style:normal;letter-spacing:-0.395px;-webkit-text-stroke:0.35px #555;">Log out</div><div class="b" style="left:1846px;top:64px;width:1px;height:12px;background:#e2e2e2;"></div><div class="t" style="left:1735.00px;top:64.00px;font-size:13px;line-height:13px;color:#555;font-weight:400;font-style:normal;letter-spacing:-0.341px;-webkit-text-stroke:0.35px #555;">Change password</div><div class="b" style="left:1724px;top:64px;width:1px;height:12px;background:#e2e2e2;"></div><div class="t" style="left:1537.50px;top:64.00px;font-size:13px;line-height:13px;color:#555;font-weight:400;font-style:normal;letter-spacing:-0.355px;-webkit-text-stroke:0.35px #555;">Smile Hotel Sendai Kokubuncho</div><div class="b" style="left:1527px;top:64px;width:1px;height:12px;background:#e2e2e2;"></div><div class="t" style="left:1475.50px;top:64.00px;font-size:13px;line-height:13px;color:#555;font-weight:400;font-style:normal;letter-spacing:-0.439px;-webkit-text-stroke:0.35px #555;">English</div><svg class="s" style="left:1455.2px;top:62px;" width="16" height="16" viewBox="0 0 16 16"><circle cx="8" cy="8" r="6.4" fill="none" stroke="#333" stroke-width="1.4"/><ellipse cx="8" cy="8" rx="2.8" ry="6.4" fill="none" stroke="#333" stroke-width="1.2"/><path d="M1.8 5.6H14.2M1.8 10.4H14.2" stroke="#333" stroke-width="1.2"/></svg><div class="b" style="left:197px;top:56px;width:34px;height:28px;background:#fff;box-shadow:inset 0 0 0 1px #dcdcdc;border-radius:3px;"></div><div class="b" style="left:208px;top:66px;width:13px;height:1px;background:#bdbdbd;"></div><div class="b" style="left:208px;top:70px;width:13px;height:1px;background:#bdbdbd;"></div><div class="b" style="left:208px;top:74px;width:13px;height:1px;background:#bdbdbd;"></div><div class="b" style="left:227.6px;top:112px;width:85.4px;height:34px;background:#fff;border-radius:5px;"></div><div class="b" style="left:317px;top:112px;width:123px;height:34px;background:#fff;border-radius:5px;"></div><div class="b" style="left:197px;top:141.5px;width:1700px;height:500.0px;background:#fff;border-radius:3px;"></div><div class="t" style="left:237.60px;top:121.00px;font-size:12.5px;line-height:12.5px;color:#111;font-weight:700;font-style:normal;letter-spacing:-1.306px;">Bookings</div><svg class="s" style="left:293.0px;top:123.0px;" width="8" height="8" viewBox="0 0 8 8"><path d="M1 1L7 7M7 1L1 7" stroke="#777" stroke-width="2"/></svg><div class="t" style="left:328.00px;top:121.00px;font-size:12.5px;line-height:12.5px;color:#8a8a8a;font-weight:400;font-style:normal;letter-spacing:-0.560px;">Rate &amp; Allotment</div><svg class="s" style="left:419.5px;top:123.0px;" width="8" height="8" viewBox="0 0 8 8"><path d="M1 1L7 7M7 1L1 7" stroke="#666" stroke-width="2"/></svg><div class="t" style="left:217.50px;top:163.00px;font-size:12px;line-height:12px;color:#ff0000;font-weight:400;font-style:normal;letter-spacing:-0.264px;">* 31th of the month (60)</div><div class="b" style="left:217px;top:176px;width:1660px;height:152px;background:#f6f6f6;box-shadow:inset 0 0 0 1px #e1e1e1;border-radius:3px;"></div><div class="b" style="left:238px;top:197px;width:103px;height:30px;background:#fff;box-shadow:inset 0 0 0 1px #c8c8c8;border-radius:4px;"></div><div class="t" style="left:249.50px;top:206.00px;font-size:12px;line-height:12px;color:#333;font-weight:400;font-style:normal;letter-spacing:-0.595px;">Booking Date</div><svg class="s" style="left:320.5px;top:209.1px;" width="10" height="5" viewBox="0 0 10 5"><path d="M0 0H10L5.0 5Z" fill="#8a8a8a"/></svg><div class="b" style="left:346px;top:197px;width:296px;height:30px;background:#fff;box-shadow:inset 0 0 0 1px #dadada;border-radius:4px;"></div><div class="t" style="left:357.00px;top:206.00px;font-size:12px;line-height:12px;color:#333;font-weight:400;font-style:normal;letter-spacing:0.847px;">2026-02-25</div><svg class="s" style="left:619.5px;top:205px;" width="14" height="14" viewBox="0 0 14 14"><rect x="1.8" y="2.8" width="10.4" height="9.6" rx="1.6" fill="none" stroke="#666" stroke-width="1.2"/><path d="M1.8 5.6H12.2M4.6 1.2V3.6M9.4 1.2V3.6" stroke="#666" stroke-width="1.2"/></svg><div class="t" style="left:649.50px;top:206.00px;font-size:12px;line-height:12px;color:#555;font-weight:400;font-style:normal;letter-spacing:0.000px;">-</div><div class="b" style="left:660px;top:197px;width:297px;height:30px;background:#fff;box-shadow:inset 0 0 0 1px #dadada;border-radius:4px;"></div><div class="t" style="left:671.00px;top:206.00px;font-size:12px;line-height:12px;color:#333;font-weight:400;font-style:normal;letter-spacing:0.847px;">2026-02-25</div><svg class="s" style="left:933.5px;top:205px;" width="14" height="14" viewBox="0 0 14 14"><rect x="1.8" y="2.8" width="10.4" height="9.6" rx="1.6" fill="none" stroke="#666" stroke-width="1.2"/><path d="M1.8 5.6H12.2M4.6 1.2V3.6M9.4 1.2V3.6" stroke="#666" stroke-width="1.2"/></svg><div class="t" style="left:1031.50px;top:206.00px;font-size:12px;line-height:12px;color:#333;font-weight:400;font-style:normal;letter-spacing:-0.503px;">Hotel</div><div class="b" style="left:1062px;top:197px;width:634px;height:30px;background:#fff;box-shadow:inset 0 0 0 1px #d0d0d0;border-radius:3px;"></div><div class="t" style="left:1073.30px;top:206.00px;font-size:12px;line-height:12px;color:#222;font-weight:400;font-style:normal;letter-spacing:-0.575px;">Smile Hotel Sendai Kokubuncho</div><svg class="s" style="left:1654.0px;top:208.5px;" width="8" height="8" viewBox="0 0 8 8"><path d="M1 1L7 7M7 1L1 7" stroke="#777" stroke-width="1.3"/></svg><svg class="s" style="left:1675.0px;top:209.1px;" width="10" height="5" viewBox="0 0 10 5"><path d="M0 0H10L5.0 5Z" fill="#8a8a8a"/></svg><div class="b" style="left:1715px;top:197px;width:69px;height:30px;background:#ee802f;border-radius:4px;"></div><div class="t" style="left:1730.55px;top:206.00px;font-size:12px;line-height:12px;color:#fff;font-weight:700;font-style:normal;letter-spacing:-0.305px;">Search</div><div class="b" style="left:1789px;top:197px;width:67px;height:30px;background:#fff;box-shadow:inset 0 0 0 1px #dcdcdc;border-radius:4px;"></div><div class="t" style="left:1807.00px;top:206.00px;font-size:12px;line-height:12px;color:#333;font-weight:400;font-style:normal;letter-spacing:-0.087px;">Reset</div><div class="t" style="left:238.40px;top:246.00px;font-size:12px;line-height:12px;color:#333;font-weight:400;font-style:normal;letter-spacing:-0.616px;">Hotel CNFM No.</div><div class="b" style="left:323px;top:238px;width:265px;height:29px;background:#fff;box-shadow:inset 0 0 0 1px #dcdcdc;border-radius:4px;"></div><div class="t" style="left:616.80px;top:246.00px;font-size:12px;line-height:12px;color:#333;font-weight:400;font-style:normal;letter-spacing:-0.617px;">Traveler Name</div><div class="b" style="left:693px;top:238px;width:264px;height:29px;background:#fff;box-shadow:inset 0 0 0 1px #dcdcdc;border-radius:4px;"></div><div class="t" style="left:1001.50px;top:246.00px;font-size:12px;line-height:12px;color:#333;font-weight:400;font-style:normal;letter-spacing:-0.744px;">BKG Status</div><div class="b" style="left:1062px;top:238px;width:265px;height:29px;background:#fff;box-shadow:inset 0 0 0 1px #d0d0d0;border-radius:3px;"></div><div class="t" style="left:1073.30px;top:245.00px;font-size:12px;line-height:12px;color:#222;font-weight:400;font-style:normal;letter-spacing:-0.670px;">Select</div><svg class="s" style="left:1307.0px;top:250.0px;" width="10" height="5" viewBox="0 0 10 5"><path d="M0 0H10L5.0 5Z" fill="#111"/></svg><div class="t" style="left:1357.30px;top:246.00px;font-size:12px;line-height:12px;color:#333;font-weight:400;font-style:normal;letter-spacing:-0.373px;">Contract Type</div><div class="b" style="left:1432px;top:238px;width:264px;height:29px;background:#fff;box-shadow:inset 0 0 0 1px #d0d0d0;border-radius:3px;"></div><div class="t" style="left:1443.30px;top:246.00px;font-size:12px;line-height:12px;color:#9a9a9a;font-weight:400;font-style:normal;letter-spacing:-1.168px;">All</div><svg class="s" style="left:1675.0px;top:249.1px;" width="10" height="5" viewBox="0 0 10 5"><path d="M0 0H10L5.0 5Z" fill="#8a8a8a"/></svg><div class="t" style="left:239.00px;top:286.00px;font-size:12px;line-height:12px;color:#333;font-weight:400;font-style:normal;letter-spacing:-0.627px;">Ellis Booking ...</div><div class="b" style="left:323px;top:278px;width:265px;height:29px;background:#fff;box-shadow:inset 0 0 0 1px #dcdcdc;border-radius:4px;"></div><div class="t" style="left:633.30px;top:286.00px;font-size:12px;line-height:12px;color:#333;font-weight:400;font-style:normal;letter-spacing:-0.435px;">V.Currency</div><div class="b" style="left:693px;top:278px;width:264px;height:29px;background:#fff;box-shadow:inset 0 0 0 1px #d0d0d0;border-radius:3px;"></div><div class="t" style="left:704.00px;top:286.00px;font-size:12px;line-height:12px;color:#222;font-weight:400;font-style:normal;letter-spacing:-1.004px;">JPY</div><svg class="s" style="left:915.0px;top:288.0px;" width="8" height="8" viewBox="0 0 8 8"><path d="M1 1L7 7M7 1L1 7" stroke="#777" stroke-width="1.3"/></svg><svg class="s" style="left:936.0px;top:288.8px;" width="10" height="5" viewBox="0 0 10 5"><path d="M0 0H10L5.0 5Z" fill="#8a8a8a"/></svg><div class="t" style="left:981.50px;top:286.00px;font-size:12px;line-height:12px;color:#333;font-weight:400;font-style:normal;letter-spacing:-0.515px;">Payment status</div><div class="b" style="left:1062px;top:278px;width:265px;height:29px;background:#fff;box-shadow:inset 0 0 0 1px #d0d0d0;border-radius:3px;"></div><div class="t" style="left:1073.30px;top:286.00px;font-size:12px;line-height:12px;color:#9a9a9a;font-weight:400;font-style:normal;letter-spacing:-1.168px;">All</div><svg class="s" style="left:1305.0px;top:288.8px;" width="10" height="5" viewBox="0 0 10 5"><path d="M0 0H10L5.0 5Z" fill="#8a8a8a"/></svg><div class="b" style="left:1345px;top:284px;width:17px;height:17px;background:#fff;box-shadow:inset 0 0 0 1px #dedede;border-radius:2px;"></div><div class="t" style="left:1365.30px;top:285.00px;font-size:15px;line-height:15px;color:#585858;font-weight:400;font-style:normal;letter-spacing:-0.561px;">Balance ≠ 0</div><div class="t" style="left:217.50px;top:349.00px;font-size:12.5px;line-height:12.5px;color:#ef8030;font-weight:700;font-style:normal;letter-spacing:0.000px;">0</div><div class="b" style="left:1735px;top:340px;width:86px;height:30px;background:#fff;box-shadow:inset 0 0 0 1px #dcdcdc;border-radius:4px;"></div><div class="t" style="left:1746.00px;top:350.00px;font-size:12px;line-height:12px;color:#333;font-weight:400;font-style:normal;letter-spacing:-0.002px;">Billing Issue</div><div class="b" style="left:1826.7px;top:340px;width:50.299999999999955px;height:30px;background:#fff;box-shadow:inset 0 0 0 1px #dcdcdc;border-radius:4px;"></div><div class="t" style="left:1837.05px;top:350.00px;font-size:12px;line-height:12px;color:#333;font-weight:400;font-style:normal;letter-spacing:0.039px;">Excel</div><div class="b" style="left:217px;top:380px;width:1661px;height:174px;background:#fff;box-shadow:inset 0 0 0 1px #ebebeb;"></div><div class="b" style="left:217px;top:380px;width:1661px;height:41px;background:#f6f6f6;box-shadow:inset 0 0 0 1px #e4e4e4;"></div><div class="b" style="left:258px;top:381px;width:1px;height:39px;background:#e2e2e2;"></div><div class="b" style="left:419px;top:381px;width:1px;height:39px;background:#e2e2e2;"></div><div class="b" style="left:719px;top:381px;width:1px;height:39px;background:#e2e2e2;"></div><div class="b" style="left:852px;top:381px;width:1px;height:39px;background:#e2e2e2;"></div><div class="b" style="left:957px;top:381px;width:1px;height:39px;background:#e2e2e2;"></div><div class="b" style="left:1111px;top:381px;width:1px;height:39px;background:#e2e2e2;"></div><div class="b" style="left:1258px;top:381px;width:1px;height:39px;background:#e2e2e2;"></div><div class="b" style="left:1440px;top:381px;width:1px;height:39px;background:#e2e2e2;"></div><div class="b" style="left:1538px;top:381px;width:1px;height:39px;background:#e2e2e2;"></div><div class="b" style="left:1636px;top:381px;width:1px;height:39px;background:#e2e2e2;"></div><div class="b" style="left:1769px;top:381px;width:1px;height:39px;background:#e2e2e2;"></div><div class="b" style="left:1861px;top:381px;width:1px;height:39px;background:#e2e2e2;"></div><div class="t" style="left:292.55px;top:394.00px;font-size:12.3px;line-height:12.3px;color:#333;font-weight:400;font-style:normal;letter-spacing:-0.573px;-webkit-text-stroke:0.35px #333;">Ellis Booking Code</div><div class="t" style="left:529.30px;top:394.00px;font-size:12.3px;line-height:12.3px;color:#333;font-weight:400;font-style:normal;letter-spacing:-0.709px;-webkit-text-stroke:0.35px #333;">Hotel CNFM No.</div><div class="t" style="left:747.80px;top:394.00px;font-size:12.3px;line-height:12.3px;color:#333;font-weight:400;font-style:normal;letter-spacing:-0.441px;-webkit-text-stroke:0.35px #333;">Booking Status</div><div class="t" style="left:875.80px;top:394.00px;font-size:12.3px;line-height:12.3px;color:#333;font-weight:400;font-style:normal;letter-spacing:-0.660px;-webkit-text-stroke:0.35px #333;">Hotel Name</div><div class="t" style="left:988.80px;top:394.00px;font-size:12.3px;line-height:12.3px;color:#333;font-weight:400;font-style:normal;letter-spacing:-0.530px;-webkit-text-stroke:0.35px #333;">1st Traveler Name</div><div class="t" style="left:1145.80px;top:394.00px;font-size:12.3px;line-height:12.3px;color:#333;font-weight:400;font-style:normal;letter-spacing:-0.657px;-webkit-text-stroke:0.35px #333;">C/ In Date &amp; Nts</div><div class="t" style="left:1299.55px;top:394.00px;font-size:12.3px;line-height:12.3px;color:#333;font-weight:400;font-style:normal;letter-spacing:-0.627px;-webkit-text-stroke:0.35px #333;">Room Type &amp; Count</div><div class="t" style="left:1462.55px;top:394.00px;font-size:12.3px;line-height:12.3px;color:#333;font-weight:400;font-style:normal;letter-spacing:-0.793px;-webkit-text-stroke:0.35px #333;">Plan Name</div><div class="t" style="left:1561.80px;top:394.00px;font-size:12.3px;line-height:12.3px;color:#333;font-weight:400;font-style:normal;letter-spacing:-0.565px;-webkit-text-stroke:0.35px #333;">Meal Type</div><div class="t" style="left:1666.55px;top:394.00px;font-size:12.3px;line-height:12.3px;color:#333;font-weight:400;font-style:normal;letter-spacing:-0.551px;-webkit-text-stroke:0.35px #333;">Free Breakfast</div><div class="b" style="left:1770px;top:381px;width:91px;height:39px;overflow:hidden"><div class="t" style="left:25.00px;top:13.00px;font-size:12.3px;line-height:12.3px;color:#333;font-weight:400;font-style:normal;letter-spacing:-0.440px;-webkit-text-stroke:0.35px #333;">Booking Date</div></div><div class="b" style="left:232px;top:393px;width:13px;height:13px;background:#fff;box-shadow:inset 0 0 0 1px #cfcfcf;border-radius:2px;"></div><div class="b" style="left:1862px;top:421px;width:15px;height:117px;background:#fafafa;"></div><svg class="s" style="left:1863.5px;top:426.5px;" width="10" height="7" viewBox="0 0 10 7"><path d="M0.5 6.5H9.5L5 0.5Z" fill="#888" stroke="#888" stroke-width="0.8" stroke-linejoin="round"/></svg><svg class="s" style="left:1863.5px;top:527.5px;" width="10" height="7" viewBox="0 0 10 7"><path d="M0.5 0.5H9.5L5 6.5Z" fill="#888" stroke="#888" stroke-width="0.8" stroke-linejoin="round"/></svg><div class="t" style="left:1556.00px;top:472.00px;font-size:12px;line-height:12px;color:#666;font-weight:400;font-style:normal;letter-spacing:-0.536px;">No records available.</div><div class="b" style="left:218px;top:538px;width:1659px;height:15px;background:#fafafa;"></div><svg class="s" style="left:222.5px;top:541px;" width="8" height="10" viewBox="0 0 8 10"><path d="M7 0.6V9.4L0.8 5Z" fill="#888" stroke="#888" stroke-width="0.8" stroke-linejoin="round"/></svg><div class="b" style="left:236.8px;top:541px;width:950.5px;height:9px;background:#8a8a8a;border-radius:4.5px;"></div><svg class="s" style="left:1850px;top:541px;" width="8" height="10" viewBox="0 0 8 10"><path d="M0.8 0.6V9.4L7 5Z" fill="#888" stroke="#888" stroke-width="0.8" stroke-linejoin="round"/></svg><div class="b" style="left:1432px;top:575px;width:446px;height:47px;background:#fff;box-shadow:inset 0 0 0 1px #e4e4e4;"></div><div class="b" style="left:1433px;top:576px;width:177.5px;height:45px;background:#f4f4f4;"></div><div class="b" style="left:1664.5px;top:576px;width:158.0px;height:45px;background:#f4f4f4;"></div><div class="t" style="left:1448.40px;top:593.00px;font-size:12.3px;line-height:12.3px;color:#333;font-weight:400;font-style:normal;letter-spacing:-0.451px;-webkit-text-stroke:0.35px #333;">Selected Billing Sum Amount</div><div class="t" style="left:1632.16px;top:593.00px;font-size:12px;line-height:12px;color:#333;font-weight:400;font-style:normal;letter-spacing:0.000px;">0</div><div class="t" style="left:1681.20px;top:593.00px;font-size:12.3px;line-height:12.3px;color:#333;font-weight:400;font-style:normal;letter-spacing:-0.454px;-webkit-text-stroke:0.35px #333;">Total Billing Sum Amount</div><div class="t" style="left:1844.46px;top:593.00px;font-size:12px;line-height:12px;color:#333;font-weight:400;font-style:normal;letter-spacing:0.000px;">0</div><div class="b" style="left:202px;top:149px;width:156px;height:29px;border:4px solid #ffa500"></div></div></div></div><div class="b" style="left:2377px;top:483px;width:1px;height:627px;background:#505050"></div><div class="b" style="left:489px;top:1110px;width:1889px;height:2px;background:#303030"></div></body></html>
